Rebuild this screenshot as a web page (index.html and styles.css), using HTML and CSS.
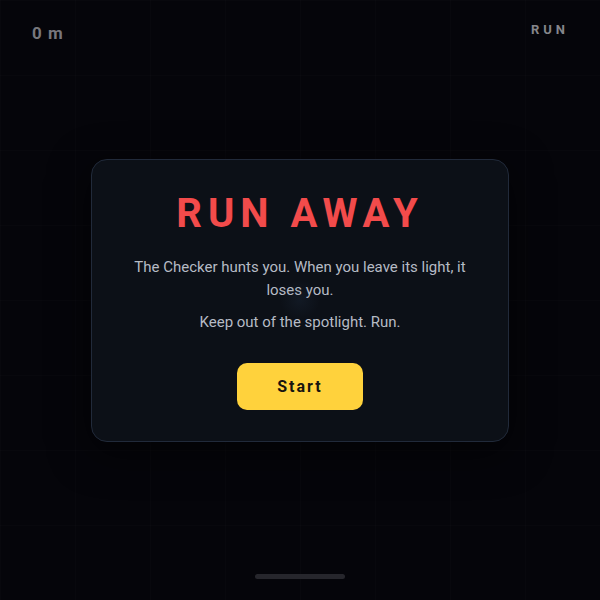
FILE: index.html
```html
<!DOCTYPE html>
<html lang="en">
<head>
    <meta charset="UTF-8">
    <meta name="viewport" content="width=device-width, initial-scale=1.0">
    <title>Run Away</title>
    <link rel="stylesheet" href="styles.css">
</head>
<body>
    <div class="stage">
        <div class="hud">
            <span class="distance">0 m</span>
            <span class="mode">RUN</span>
        </div>

        <div class="spot"></div>

        <div class="panel">
            <h1>RUN AWAY</h1>
            <p>The Checker hunts you. When you leave its light, it loses you.</p>
            <p>Keep out of the spotlight. Run.</p>
            <button class="start">Start</button>
        </div>

        <div class="home-bar"></div>
    </div>
</body>
</html>
```

FILE: styles.css
```css
body {
    margin: 0;
    background: #05050a;
    font-family: Roboto, 'Noto Sans', sans-serif;
    overflow: hidden;
}

.stage {
    position: relative;
    height: 600px;
    display: flex;
    justify-content: center;
    align-items: center;
    background-image:
        linear-gradient(rgba(255, 255, 255, 0.012) 1px, transparent 1px),
        linear-gradient(90deg, rgba(255, 255, 255, 0.012) 1px, transparent 1px);
    background-size: 75px 75px;
}

.hud {
    position: absolute;
    top: 0;
    left: 0;
    right: 0;
    display: flex;
    justify-content: space-between;
    padding: 23px 31px 0 32px;
}

.distance {
    color: #77777d;
    font-size: 17px;
    font-weight: 700;
    letter-spacing: 1px;
}

.mode {
    color: #85858b;
    font-size: 13px;
    font-weight: 700;
    letter-spacing: 4px;
    margin-top: -1px;
}

/* faint glow of the checker's light */
.spot {
    position: absolute;
    left: 280px;
    top: 280px;
    width: 40px;
    height: 40px;
    border-radius: 50%;
    background: radial-gradient(circle, rgba(60, 90, 130, 0.12), transparent 70%);
    z-index: 2;
}

.panel {
    width: 418px;
    box-sizing: border-box;
    padding: 30px 20px 31px;
    background: #0c1017;
    border: 1px solid #212a3a;
    border-radius: 16px;
    box-shadow: 0 10px 40px rgba(0, 0, 0, 0.6);
    text-align: center;
}

h1 {
    margin: 0 0 18px;
    color: #f24b4b;
    font-size: 40px;
    line-height: 48px;
    font-weight: 700;
    letter-spacing: 6px;
}

.panel p {
    max-width: 340px;
    margin: 0 auto 9px;
    color: #b6bbc5;
    font-size: 15px;
    line-height: 23px;
}

.start {
    margin-top: 20px;
    width: 126px;
    height: 47px;
    border: none;
    border-radius: 10px;
    background: #ffd23c;
    color: #16140f;
    font-family: inherit;
    font-size: 16px;
    font-weight: 700;
    letter-spacing: 2px;
    cursor: pointer;
}

.home-bar {
    position: absolute;
    bottom: 21px;
    left: 255px;
    width: 90px;
    height: 5px;
    border-radius: 3px;
    background: #26262c;
}
```
